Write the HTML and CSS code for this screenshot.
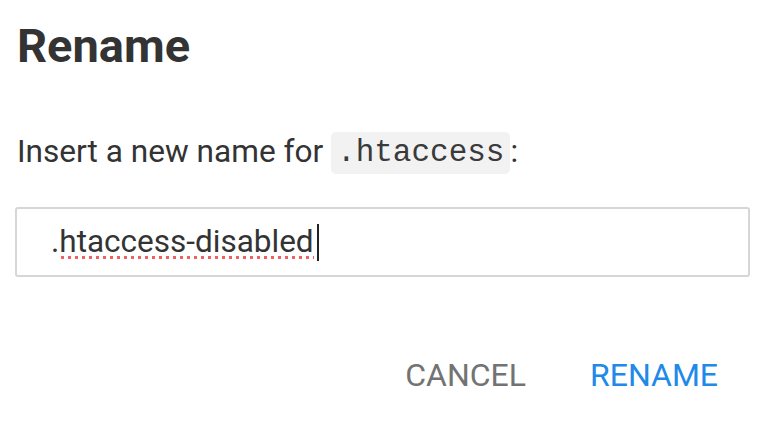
FILE: index.html
```html
<!DOCTYPE html>
<html>
<head>
<meta charset="utf-8">
<link rel="stylesheet" href="styles.css">
</head>
<body>
<div class="dialog">
  <h1 class="title">Rename</h1>
  <p class="prompt">Insert a new name for <code class="code">.htaccess</code>:</p>
  <div class="field"><span class="value">.<span class="misspelled">htaccess-disabled</span></span><span class="caret"></span></div>
  <div class="actions">
    <button class="btn btn-cancel">CANCEL</button>
    <button class="btn btn-ok">RENAME</button>
  </div>
</div>
</body>
</html>
```
FILE: styles.css
```css
html, body {
  margin: 0;
  padding: 0;
  background: #ffffff;
}
body {
  font-family: Roboto, "Liberation Sans", sans-serif;
  color: #333333;
}
.dialog {
  width: 764px;
  height: 434px;
  box-sizing: border-box;
  padding: 19px 14px 0 15px;
  display: flex;
  flex-direction: column;
}
.title {
  margin: 0 0 0 2px;
  font-size: 47px;
  line-height: 54px;
  font-weight: 700;
  color: #333333;
}
.prompt {
  margin: 57px 0 0 2px;
  font-size: 31.6px;
  line-height: 44px;
  color: #333333;
}
.code {
  display: inline-block;
  font-family: "Liberation Mono", monospace;
  font-size: 31px;
  line-height: 42px;
  height: 42px;
  padding: 0 6px;
  background: #f2f2f2;
  border-radius: 5px;
  color: #3a3a3a;
  vertical-align: 1px;
}
.field {
  margin-top: 33px;
  height: 70px;
  box-sizing: border-box;
  border: 2px solid #d6d6d6;
  border-radius: 3px;
  display: flex;
  align-items: center;
  padding-left: 34px;
  font-size: 31.5px;
  color: #333333;
}
.value {
  line-height: 40px;
}
.misspelled {
  background-image: radial-gradient(circle, #f25f5f 1.5px, transparent 2px);
  background-repeat: repeat-x;
  background-size: 7px 5px;
  background-position: 0 bottom;
}
.caret {
  display: inline-block;
  width: 2px;
  height: 37px;
  background: #222222;
  margin-left: 3px;
  margin-top: 1px;
}
.actions {
  margin-top: 73px;
  display: flex;
  justify-content: flex-end;
}
.btn {
  border: none;
  background: transparent;
  font-family: Roboto, "Liberation Sans", sans-serif;
  font-size: 32px;
  line-height: 50px;
  padding: 0 32px;
  margin: 0;
}
.btn-cancel {
  color: #737373;
}
.btn-ok {
  color: #2189e8;
}
```
